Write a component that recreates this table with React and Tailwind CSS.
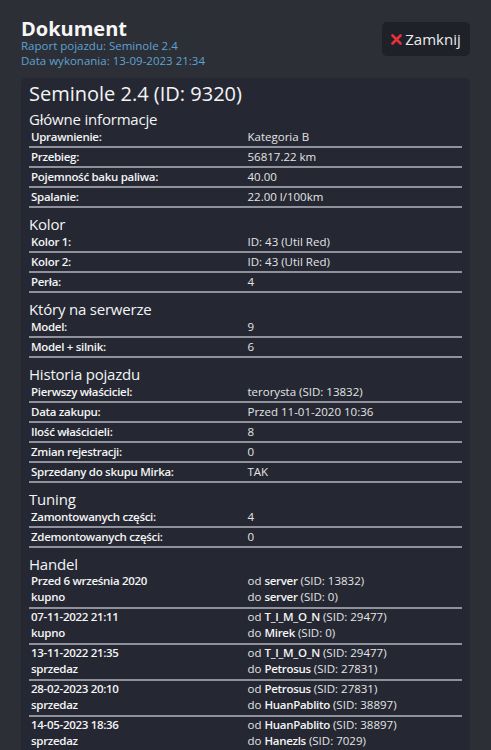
import React from "react";

const font = { fontFamily: '"Open Sans", "Noto Sans", sans-serif' };

function Row({ label, value }) {
  return (
    <div className="grid grid-cols-2 border-b-2 border-[#8f929a] h-[20px] leading-[18px] text-[11.5px]">
      <div className="px-[2px] font-semibold tracking-[-0.3px] text-[#f4f4f4] whitespace-nowrap">{label}</div>
      <div className="px-[2px] text-[#e4e4e4] whitespace-nowrap">{value}</div>
    </div>
  );
}

function Section({ title, rows, first }) {
  return (
    <div className={first ? "mt-[2px]" : "mt-[7px]"}>
      <div className="text-[15px] leading-[18px] tracking-[-0.2px] text-[#f4f4f4]">{title}</div>
      {rows.map(([l, v]) => (
        <Row key={l} label={l} value={v} />
      ))}
    </div>
  );
}

function Party({ dir, name, sid }) {
  return (
    <div>
      {dir} <span className="font-semibold tracking-[-0.3px] text-[#f4f4f4]">{name}</span> (SID: {sid})
    </div>
  );
}

function Trade({ date, type, from, fromSid, to, toSid }) {
  return (
    <div className="grid grid-cols-2 border-b-2 border-[#8f929a] leading-[16px] pb-[2px] text-[11.5px]">
      <div className="px-[2px] font-semibold tracking-[-0.3px] text-[#f4f4f4] whitespace-nowrap">
        <div>{date}</div>
        <div>{type}</div>
      </div>
      <div className="px-[2px] text-[#e4e4e4] whitespace-nowrap">
        <Party dir="od" name={from} sid={fromSid} />
        <Party dir="do" name={to} sid={toSid} />
      </div>
    </div>
  );
}

export default function App() {
  return (
    <div
      className="min-h-screen w-full bg-[#2c2f36] px-[21px] pt-[19px] overflow-hidden"
      style={font}
    >
      <div className="flex justify-between items-start">
        <div>
          <div className="text-[20px] leading-[19px] font-bold text-[#f6f6f6]">Dokument</div>
          <div className="text-[11.5px] leading-[15px] text-[#5fa2d2]">
            <div>Raport pojazdu: Seminole 2.4</div>
            <div>Data wykonania: 13-09-2023 21:34</div>
          </div>
        </div>
        <button className="mt-[3px] h-[34px] w-[88px] rounded-[5px] bg-[#1f2129] flex items-center justify-center gap-[3px] text-[15px] text-[#ececec]">
          <svg width="11" height="11" viewBox="0 0 11 11">
            <path d="M1.5 1.5 L9.5 9.5 M9.5 1.5 L1.5 9.5" stroke="#e8303a" strokeWidth="2.6" strokeLinecap="round" />
          </svg>
          <span>Zamknij</span>
        </button>
      </div>

      <div className="mt-[10px] rounded-[5px] bg-[#252833] px-[8px] pt-[2px] pb-[20px]">
        <div className="text-[20px] leading-[28px] text-[#f4f4f4]">Seminole 2.4 (ID: 9320)</div>
        <Section
          first
          title="Główne informacje"
          rows={[
            ["Uprawnienie:", "Kategoria B"],
            ["Przebieg:", "56817.22 km"],
            ["Pojemność baku paliwa:", "40.00"],
            ["Spalanie:", "22.00 l/100km"],
          ]}
        />
        <Section
          title="Kolor"
          rows={[
            ["Kolor 1:", "ID: 43 (Util Red)"],
            ["Kolor 2:", "ID: 43 (Util Red)"],
            ["Perła:", "4"],
          ]}
        />
        <Section
          title="Który na serwerze"
          rows={[
            ["Model:", "9"],
            ["Model + silnik:", "6"],
          ]}
        />
        <Section
          title="Historia pojazdu"
          rows={[
            ["Pierwszy właściciel:", "terorysta (SID: 13832)"],
            ["Data zakupu:", "Przed 11-01-2020 10:36"],
            ["Ilość właścicieli:", "8"],
            ["Zmian rejestracji:", "0"],
            ["Sprzedany do skupu Mirka:", "TAK"],
          ]}
        />
        <Section
          title="Tuning"
          rows={[
            ["Zamontowanych części:", "4"],
            ["Zdemontowanych części:", "0"],
          ]}
        />
        <div className="mt-[7px]">
          <div className="text-[15px] leading-[18px] tracking-[-0.2px] text-[#f4f4f4]">Handel</div>
          <Trade date="Przed 6 września 2020" type="kupno" from="server" fromSid="13832" to="server" toSid="0" />
          <Trade date="07-11-2022 21:11" type="kupno" from="T_I_M_O_N" fromSid="29477" to="Mirek" toSid="0" />
          <Trade date="13-11-2022 21:35" type="sprzedaz" from="T_I_M_O_N" fromSid="29477" to="Petrosus" toSid="27831" />
          <Trade date="28-02-2023 20:10" type="sprzedaz" from="Petrosus" fromSid="27831" to="HuanPablito" toSid="38897" />
          <Trade date="14-05-2023 18:36" type="sprzedaz" from="HuanPablito" fromSid="38897" to="Hanezls" toSid="7029" />
        </div>
      </div>
    </div>
  );
}
